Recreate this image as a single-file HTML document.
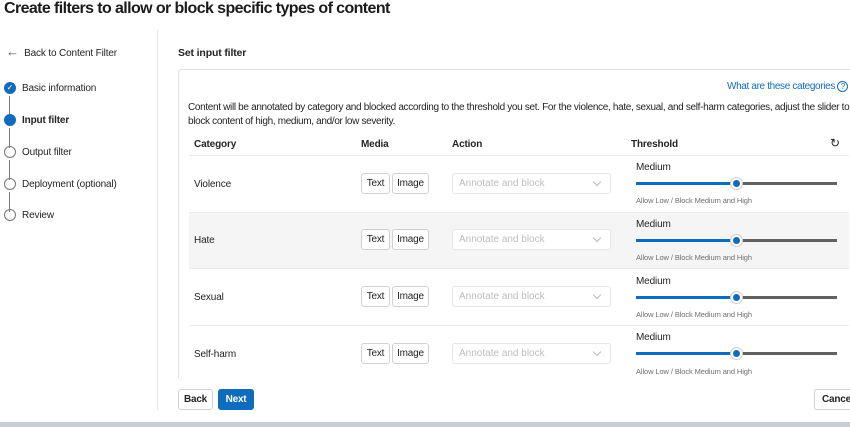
<!DOCTYPE html>
<html><head><style>
*{margin:0;padding:0;box-sizing:border-box}
body{width:850px;height:427px;overflow:hidden;background:#fff;font-family:"Liberation Sans",sans-serif;color:#242424;position:relative}
.a{position:absolute;white-space:nowrap}
.s{font-size:10px;letter-spacing:-0.15px}
.btn{position:absolute;height:21px;border:1px solid #d1d1d1;border-radius:3px;font-size:10px;line-height:20px;text-align:center;background:#fff;letter-spacing:-0.2px}
.dd{position:absolute;width:159px;height:21px;border:1px solid #e6e6e6;border-radius:3px;font-size:10px;color:#bdbdbd;line-height:20px;padding-left:6px;background:#fff}
.dd:after{content:"";position:absolute;right:10px;top:5px;width:5px;height:5px;border-right:1px solid #bbb;border-bottom:1px solid #bbb;transform:rotate(45deg)}
.sl{position:absolute;left:636px;width:201px;height:3px;background:#616161}
.sl i{position:absolute;left:0;top:0;width:100px;height:3px;background:#0f6cbd}
.sl b{position:absolute;left:95px;top:-4px;width:11px;height:11px;border-radius:50%;background:#0f6cbd;border:2px solid #fff;box-shadow:0 0 0 1px #ccc}
.row{position:absolute;left:189px;width:660px;height:57px;border-top:1px solid #ebebeb}
.c{position:absolute;width:12px;height:12px;border-radius:50%;left:4px}
.ln{position:absolute;left:9px;width:1px;height:20px;background:#777}
.sm{font-size:7.5px;color:#707070;letter-spacing:-0.1px}
</style></head><body>
<div class="a" style="left:4px;top:0;font-size:16px;font-weight:bold;color:#1b1b1b;letter-spacing:-0.6px">Create filters to allow or block specific types of content</div>
<div class="a s" style="left:6px;top:44px"><span style="font-size:13px;color:#555">←</span>&nbsp; Back to Content Filter</div>
<div class="c" style="top:82px;background:#0f6cbd;color:#fff;font-size:8px;text-align:center;line-height:12px">✓</div>
<div class="ln" style="top:96px"></div>
<div class="c" style="top:114px;background:#0f6cbd"></div>
<div class="ln" style="top:128px"></div>
<div class="c" style="top:146px;border:1px solid #777"></div>
<div class="ln" style="top:160px"></div>
<div class="c" style="top:178px;border:1px solid #777"></div>
<div class="ln" style="top:192px"></div>
<div class="c" style="top:209px;border:1px solid #777"></div>
<div class="a s" style="left:22px;top:83px">Basic information</div>
<div class="a s" style="left:22px;top:115px;font-weight:bold">Input filter</div>
<div class="a s" style="left:22px;top:147px">Output filter</div>
<div class="a s" style="left:22px;top:179px">Deployment (optional)</div>
<div class="a s" style="left:22px;top:210px">Review</div>
<div class="a" style="left:157px;top:30px;width:1px;height:380px;background:#e6e6e6"></div>
<div class="a s" style="left:178px;top:47px;font-weight:bold;font-size:10.5px">Set input filter</div>
<div class="a" style="left:178px;top:69px;width:680px;height:312px;border:1px solid #e0e0e0;border-radius:4px;border-bottom:none"></div>
<div class="a s" style="left:727px;top:81px;color:#0f6cbd;letter-spacing:-0.35px">What are these categories <span style="display:inline-block;width:11px;height:11px;border:1px solid #0f6cbd;border-radius:50%;font-size:8px;line-height:9px;text-align:center;letter-spacing:0">?</span></div>
<div class="a s" style="left:188px;top:101px;line-height:14px;letter-spacing:-0.33px">Content will be annotated by category and blocked according to the threshold you set. For the violence, hate, sexual, and self-harm categories, adjust the slider to<br>block content of high, medium, and/or low severity.</div>
<div class="a s" style="left:194px;top:139px;font-weight:bold">Category</div>
<div class="a s" style="left:361px;top:139px;font-weight:bold">Media</div>
<div class="a s" style="left:452px;top:139px;font-weight:bold">Action</div>
<div class="a s" style="left:631px;top:139px;font-weight:bold">Threshold</div>
<div class="a" style="left:830px;top:136px;font-size:12px">↻</div>
<div class="row" style="top:155px"></div>
<div class="row" style="top:212px;background:#f5f5f5"></div>
<div class="row" style="top:268px"></div>
<div class="row" style="top:325px;height:55px"></div>

<div class="a s" style="left:194px;top:179px">Violence</div>
<div class="a s" style="left:194px;top:235px">Hate</div>
<div class="a s" style="left:194px;top:292px">Sexual</div>
<div class="a s" style="left:194px;top:349px">Self-harm</div>

<div class="btn" style="left:361px;top:173px;width:29px">Text</div><div class="btn" style="left:392px;top:173px;width:37px">Image</div><div class="dd" style="left:452px;top:173px">Annotate and block</div>
<div class="btn" style="left:361px;top:229px;width:29px">Text</div><div class="btn" style="left:392px;top:229px;width:37px">Image</div><div class="dd" style="left:452px;top:229px">Annotate and block</div>
<div class="btn" style="left:361px;top:286px;width:29px">Text</div><div class="btn" style="left:392px;top:286px;width:37px">Image</div><div class="dd" style="left:452px;top:286px">Annotate and block</div>
<div class="btn" style="left:361px;top:343px;width:29px">Text</div><div class="btn" style="left:392px;top:343px;width:37px">Image</div><div class="dd" style="left:452px;top:343px">Annotate and block</div>

<div class="a s" style="left:636px;top:162px">Medium</div><div class="sl" style="top:182px"><i></i><b></b></div><div class="a sm" style="left:636px;top:196px">Allow Low / Block Medium and High</div>
<div class="a s" style="left:636px;top:219px">Medium</div><div class="sl" style="top:239px"><i></i><b></b></div><div class="a sm" style="left:636px;top:253px">Allow Low / Block Medium and High</div>
<div class="a s" style="left:636px;top:276px">Medium</div><div class="sl" style="top:296px"><i></i><b></b></div><div class="a sm" style="left:636px;top:310px">Allow Low / Block Medium and High</div>
<div class="a s" style="left:636px;top:332px">Medium</div><div class="sl" style="top:352px"><i></i><b></b></div><div class="a sm" style="left:636px;top:367px">Allow Low / Block Medium and High</div>

<div class="btn" style="left:178px;top:389px;width:35px;height:21px;font-weight:bold">Back</div>
<div class="btn" style="left:218px;top:389px;width:36px;height:21px;background:#0f6cbd;border-color:#0f6cbd;color:#fff;font-weight:bold">Next</div>
<div class="btn" style="left:814px;top:389px;width:45px;height:21px;font-weight:bold;text-align:left;padding-left:7px">Cancel</div>
<div class="a" style="left:0;top:422px;width:850px;height:5px;background:#c9ced5"></div>
</body></html>
